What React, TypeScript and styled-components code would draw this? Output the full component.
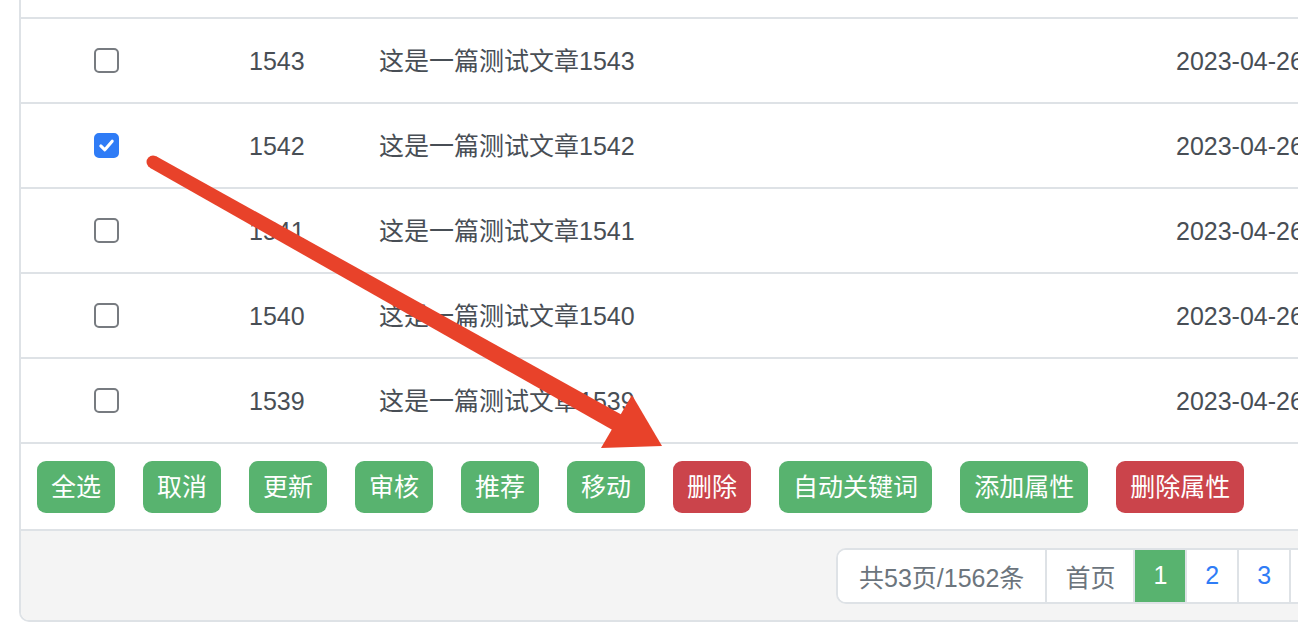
import { createGlobalStyle, styled } from "styled-components";

const rows = [
  { id: 1543, checked: false },
  { id: 1542, checked: true },
  { id: 1541, checked: false },
  { id: 1540, checked: false },
  { id: 1539, checked: false },
];

const actions = [
  { label: "全选", danger: false },
  { label: "取消", danger: false },
  { label: "更新", danger: false },
  { label: "审核", danger: false },
  { label: "推荐", danger: false },
  { label: "移动", danger: false },
  { label: "删除", danger: true },
  { label: "自动关键词", danger: false },
  { label: "添加属性", danger: false },
  { label: "删除属性", danger: true },
];

const pages = ["1", "2", "3", "4", "5"];

const App = () => {
  return (
    <>
      <GlobalStyle />
      <Page>
        <Card>
          {/* 上一行被滚动裁掉，只剩底边 */}
          <TopGap />
          <Table>
            {rows.map((row) => (
              <Row key={row.id}>
                <CheckCell>
                  <CheckBox $checked={row.checked}>
                    {row.checked ? (
                      <svg width="19" height="19" viewBox="0 0 16 16">
                        <path
                          d="M3.2 8.4 L6.6 11.6 L12.8 4.4"
                          fill="none"
                          stroke="#fff"
                          strokeWidth="2.6"
                          strokeLinecap="round"
                          strokeLinejoin="round"
                        />
                      </svg>
                    ) : null}
                  </CheckBox>
                </CheckCell>
                <Cell $pad={58}>{row.id}</Cell>
                <Cell>这是一篇测试文章{row.id}</Cell>
                <Cell>2023-04-26 10:32:18</Cell>
              </Row>
            ))}
          </Table>

          {/* 批量操作 */}
          <Toolbar>
            {actions.map((item) => (
              <ActionButton key={item.label} $danger={item.danger}>
                {item.label}
              </ActionButton>
            ))}
          </Toolbar>

          {/* 分页 */}
          <Footer>
            <Pager>
              <PageItem $first>共53页/1562条</PageItem>
              <PageItem>首页</PageItem>
              {pages.map((p) => (
                <PageItem key={p} $link $active={p === "1"}>
                  {p}
                </PageItem>
              ))}
              <PageItem $link>下一页</PageItem>
              <PageItem $link>尾页</PageItem>
            </Pager>
          </Footer>
        </Card>

        <Arrow viewBox="0 0 1298 626" width="1298" height="626">
          <circle cx="153" cy="162" r="6.5" fill="#e8422a" />
          <polygon
            points="149.8,167.7 156.2,156.3 624.4,416.2 615.6,431.8"
            fill="#e8422a"
          />
          <polygon points="662,446 632,395 601,448" fill="#e8422a" />
        </Arrow>
      </Page>
    </>
  );
};

const GlobalStyle = createGlobalStyle`
  body {
    margin: 0;
    background: #fff;
    overflow: hidden;
    font-family: "Liberation Sans", "Noto Sans CJK SC", sans-serif;
  }
`;

const Page = styled.div`
  position: relative;
  width: 1298px;
  height: 626px;
  overflow: hidden;
  padding-left: 19px;
  box-sizing: border-box;
`;

// 整个卡片，顶部被滚动裁掉
const Card = styled.div`
  width: 1700px;
  border: 2px solid #dee2e6;
  border-top: none;
  border-radius: 0 0 10px 10px;
  overflow: hidden;
  background: #fff;
`;

const TopGap = styled.div`
  height: 17px;
  border-bottom: 2px solid #dee2e6;
`;

const Table = styled.div`
  display: flex;
  flex-direction: column;
`;

const Row = styled.div`
  display: grid;
  grid-template-columns: 170px 188px 797px 1fr;
  align-items: center;
  height: 83px;
  border-bottom: 2px solid #dee2e6;
  font-size: 25px;
  color: #484e55;
`;

const Cell = styled.div<{ $pad?: number }>`
  padding-left: ${({ $pad }) => ($pad ? `${$pad}px` : "0")};
  white-space: nowrap;
  line-height: 30px;
`;

const CheckCell = styled.div`
  display: flex;
  justify-content: center;
`;

const CheckBox = styled.span<{ $checked: boolean }>`
  display: flex;
  align-items: center;
  justify-content: center;
  width: 25px;
  height: 25px;
  box-sizing: border-box;
  border-radius: 5px;
  border: ${({ $checked }) =>
    $checked ? "2px solid #2f7cf6" : "2px solid #777b80"};
  background: ${({ $checked }) => ($checked ? "#2f7cf6" : "#fff")};
`;

const Toolbar = styled.div`
  display: flex;
  gap: 28px;
  padding: 17px 16px 16px;
  border-bottom: 2px solid #dee2e6;
`;

const ActionButton = styled.button<{ $danger: boolean }>`
  height: 52px;
  padding: 0 14px;
  border: none;
  border-radius: 9px;
  background: ${({ $danger }) => ($danger ? "#cb444b" : "#58b36f")};
  color: #fff;
  font-family: "Liberation Sans", "Noto Sans CJK SC", sans-serif;
  font-size: 25px;
  line-height: 52px;
`;

const Footer = styled.div`
  display: flex;
  height: 89px;
  align-items: center;
  padding-left: 815px;
  background: #f4f4f4;
`;

const Pager = styled.div`
  display: flex;
  height: 56px;
  border: 2px solid #dee2e6;
  border-radius: 10px;
  box-sizing: border-box;
  overflow: hidden;
  background: #fff;
`;

const PageItem = styled.div<{ $first?: boolean; $link?: boolean; $active?: boolean }>`
  display: flex;
  align-items: center;
  justify-content: center;
  padding: ${({ $first }) => ($first ? "0 21px" : "0 18px")};
  border-left: ${({ $first }) => ($first ? "none" : "2px solid #dee2e6")};
  font-size: 25px;
  white-space: nowrap;
  background: ${({ $active }) => ($active ? "#58b36f" : "#fff")};
  color: ${({ $active, $link }) =>
    $active ? "#fff" : $link ? "#2f7cf6" : "#6c757d"};
`;

// 红色标注箭头
const Arrow = styled.svg`
  position: absolute;
  left: 0;
  top: 0;
  pointer-events: none;
`;

export default App;
